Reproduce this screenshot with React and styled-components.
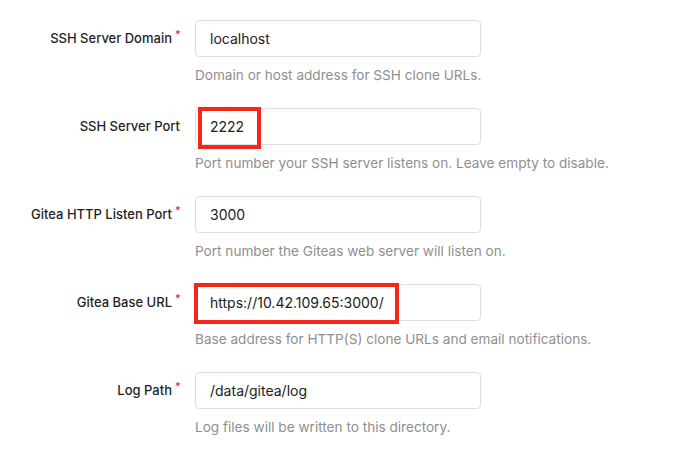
import styled, { createGlobalStyle } from "styled-components";

const GlobalStyle = createGlobalStyle`
  body {
    margin: 0;
    background: #ffffff;
    font-family: Inter, "Noto Sans", "Liberation Sans", sans-serif;
    color: #212121;
  }
`;

const Page = styled.div`
  position: relative;
  width: 688px;
  height: 460px;
  overflow: hidden;
  padding-top: 20px;
  box-sizing: border-box;
`;

const Field = styled.div`
  display: grid;
  grid-template-columns: 180px 286px;
  column-gap: 15px;
  row-gap: 9px;
  margin-bottom: 24px;
`;

const Label = styled.label`
  display: flex;
  justify-content: flex-end;
  align-items: center;
  height: 37px;
  font-size: 13px;
  font-weight: 500;
  color: #1f1f1f;
  padding-bottom: 1px;
  box-sizing: border-box;
`;

const Star = styled.span`
  color: #db2828;
  font-size: 11px;
  align-self: flex-start;
  margin-top: 7px;
  margin-left: 3px;
  width: 5px;
`;

const Input = styled.div`
  height: 37px;
  box-sizing: border-box;
  border: 1px solid #dedede;
  border-radius: 4px;
  padding: 0 14px;
  display: flex;
  align-items: center;
  font-size: 14px;
  color: #212121;
  background: #fff;
`;

const Help = styled.div`
  grid-column: 2;
  font-size: 13.6px;
  color: #8f8f8f;
  line-height: 18px;
  white-space: nowrap;
`;

const Highlight = styled.div`
  position: absolute;
  border: 4px solid #f5271d;
  box-sizing: border-box;
  pointer-events: none;
`;

const fields = [
  {
    label: "SSH Server Domain",
    required: true,
    value: "localhost",
    help: "Domain or host address for SSH clone URLs.",
  },
  {
    label: "SSH Server Port",
    required: false,
    value: "2222",
    help: "Port number your SSH server listens on. Leave empty to disable.",
  },
  {
    label: "Gitea HTTP Listen Port",
    required: true,
    value: "3000",
    help: "Port number the Giteas web server will listen on.",
  },
  {
    label: "Gitea Base URL",
    required: true,
    value: "https://10.42.109.65:3000/",
    help: "Base address for HTTP(S) clone URLs and email notifications.",
  },
  {
    label: "Log Path",
    required: true,
    value: "/data/gitea/log",
    help: "Log files will be written to this directory.",
  },
];

export default function App() {
  return (
    <>
      <GlobalStyle />
      <Page>
        {fields.map((f) => (
          <Field key={f.label}>
            <Label>
              {f.label}
              {f.required && <Star>*</Star>}
            </Label>
            <Input>{f.value}</Input>
            <Help>{f.help}</Help>
          </Field>
        ))}
        <Highlight style={{ left: 198, top: 107, width: 63, height: 42 }} />
        <Highlight style={{ left: 194, top: 283, width: 205, height: 41 }} />
      </Page>
    </>
  );
}
